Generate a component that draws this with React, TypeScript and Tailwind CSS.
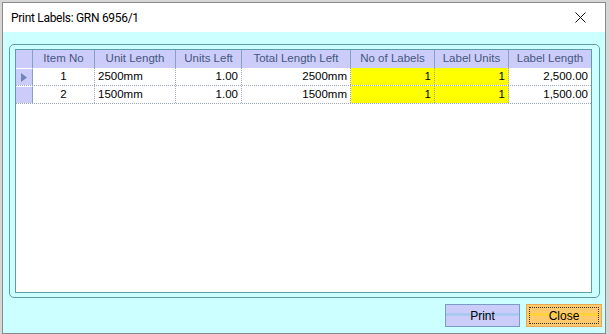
import React from "react";

const cols = [
  { label: "Item No", w: 62 },
  { label: "Unit Length", w: 81 },
  { label: "Units Left", w: 66 },
  { label: "Total Length Left", w: 109 },
  { label: "No of Labels", w: 84 },
  { label: "Label Units", w: 74 },
  { label: "Label Length", w: 82 },
];

const rows = [
  ["1", "2500mm", "1.00", "2500mm", "1", "1", "2,500.00"],
  ["2", "1500mm", "1.00", "1500mm", "1", "1", "1,500.00"],
];

const align = ["center", "left", "right", "right", "right", "right", "right"];

export default function App() {
  return (
    <div
      className="w-[609px] h-[334px] overflow-hidden bg-[#d6d6d6] pt-[2px] pl-[2px]"
      style={{ fontFamily: '"Liberation Sans", Arial, sans-serif' }}
    >
      <div className="w-[604px] h-[332px] border border-[#8a8a8a] flex flex-col bg-white">
        <div className="h-[29px] bg-white flex items-center pl-[8px] pr-[19px] justify-between">
          <span
            className="text-[12px] tracking-[-0.3px] text-black"
            style={{ fontFamily: "Roboto, sans-serif" }}
          >
            Print Labels: GRN 6956/1
          </span>
          <svg width="11" height="11" viewBox="0 0 11 11">
            <path d="M0.5 0.5 L10.5 10.5 M10.5 0.5 L0.5 10.5" stroke="#111" strokeWidth="1" />
          </svg>
        </div>
        <div className="flex-1 bg-[#ccffff] pl-[6px] pr-[2px] pt-[12px] pb-[6px] flex flex-col">
          <div className="h-[254px] w-[591px] border border-[#5d9cab] rounded-[5px] pl-[5px] pt-[4px] pr-[7px] pb-[4px] flex">
            <div className="flex-1 border border-[#5d9cab] bg-white text-[11.5px]">
              <div className="flex h-[18px] bg-[#ccccfa] text-[#45577e]">
                <div className="w-[17px] border-r border-[#8aa0c0]" />
                {cols.map((c, i) => (
                  <div
                    key={c.label}
                    style={{ width: c.w }}
                    className={`flex items-center justify-center leading-none ${i < cols.length - 1 ? "border-r border-[#8aa0c0]" : ""}`}
                  >
                    {c.label}
                  </div>
                ))}
              </div>
              {rows.map((r, ri) => (
                <div key={ri} className="flex h-[18px] border-b border-dotted border-[#9aa8b8] text-black">
                  <div className="w-[17px] bg-[#ccccfa] border-r border-[#8aa0c0] border-t border-t-white flex items-center pl-[5px]">
                    {ri === 0 && (
                      <svg width="6" height="9" viewBox="0 0 6 9">
                        <path d="M0 0 L6 4.5 L0 9 Z" fill="#6f86bd" />
                      </svg>
                    )}
                  </div>
                  {r.map((v, ci) => (
                    <div
                      key={ci}
                      style={{ width: cols[ci].w }}
                      className={`flex items-center px-[3px] leading-none ${align[ci] === "center" ? "justify-center" : align[ci] === "left" ? "justify-start" : "justify-end"} ${ci === 4 || ci === 5 ? "bg-[#ffff00]" : ""} ${ci < r.length - 1 ? "border-r border-dotted border-[#9aa8b8]" : ""}`}
                    >
                      {v}
                    </div>
                  ))}
                </div>
              ))}
            </div>
          </div>
          <div className="flex justify-end gap-[6px] mt-[6px] pr-[1px]">
            <button className="relative w-[75px] h-[23px] bg-[#ccccfa] border border-[#7a9cc8] text-[12px] text-black flex items-center justify-center">
              <span className="absolute left-0 right-0 top-[8px] h-[3px] bg-[#a9c8f2]" />
              <span className="relative">Print</span>
            </button>
            <button className="relative w-[76px] h-[23px] bg-[#ffc96e] border border-[#e8a850] text-[12px] text-black flex items-center justify-center">
              <span className="absolute left-0 right-0 top-[8px] h-[3px] bg-[#ffd23a]" />
              <span className="absolute left-[2px] right-[2px] top-[2px] bottom-[2px] border border-dotted border-[#333]" />
              <span className="relative">Close</span>
            </button>
          </div>
        </div>
      </div>
    </div>
  );
}
